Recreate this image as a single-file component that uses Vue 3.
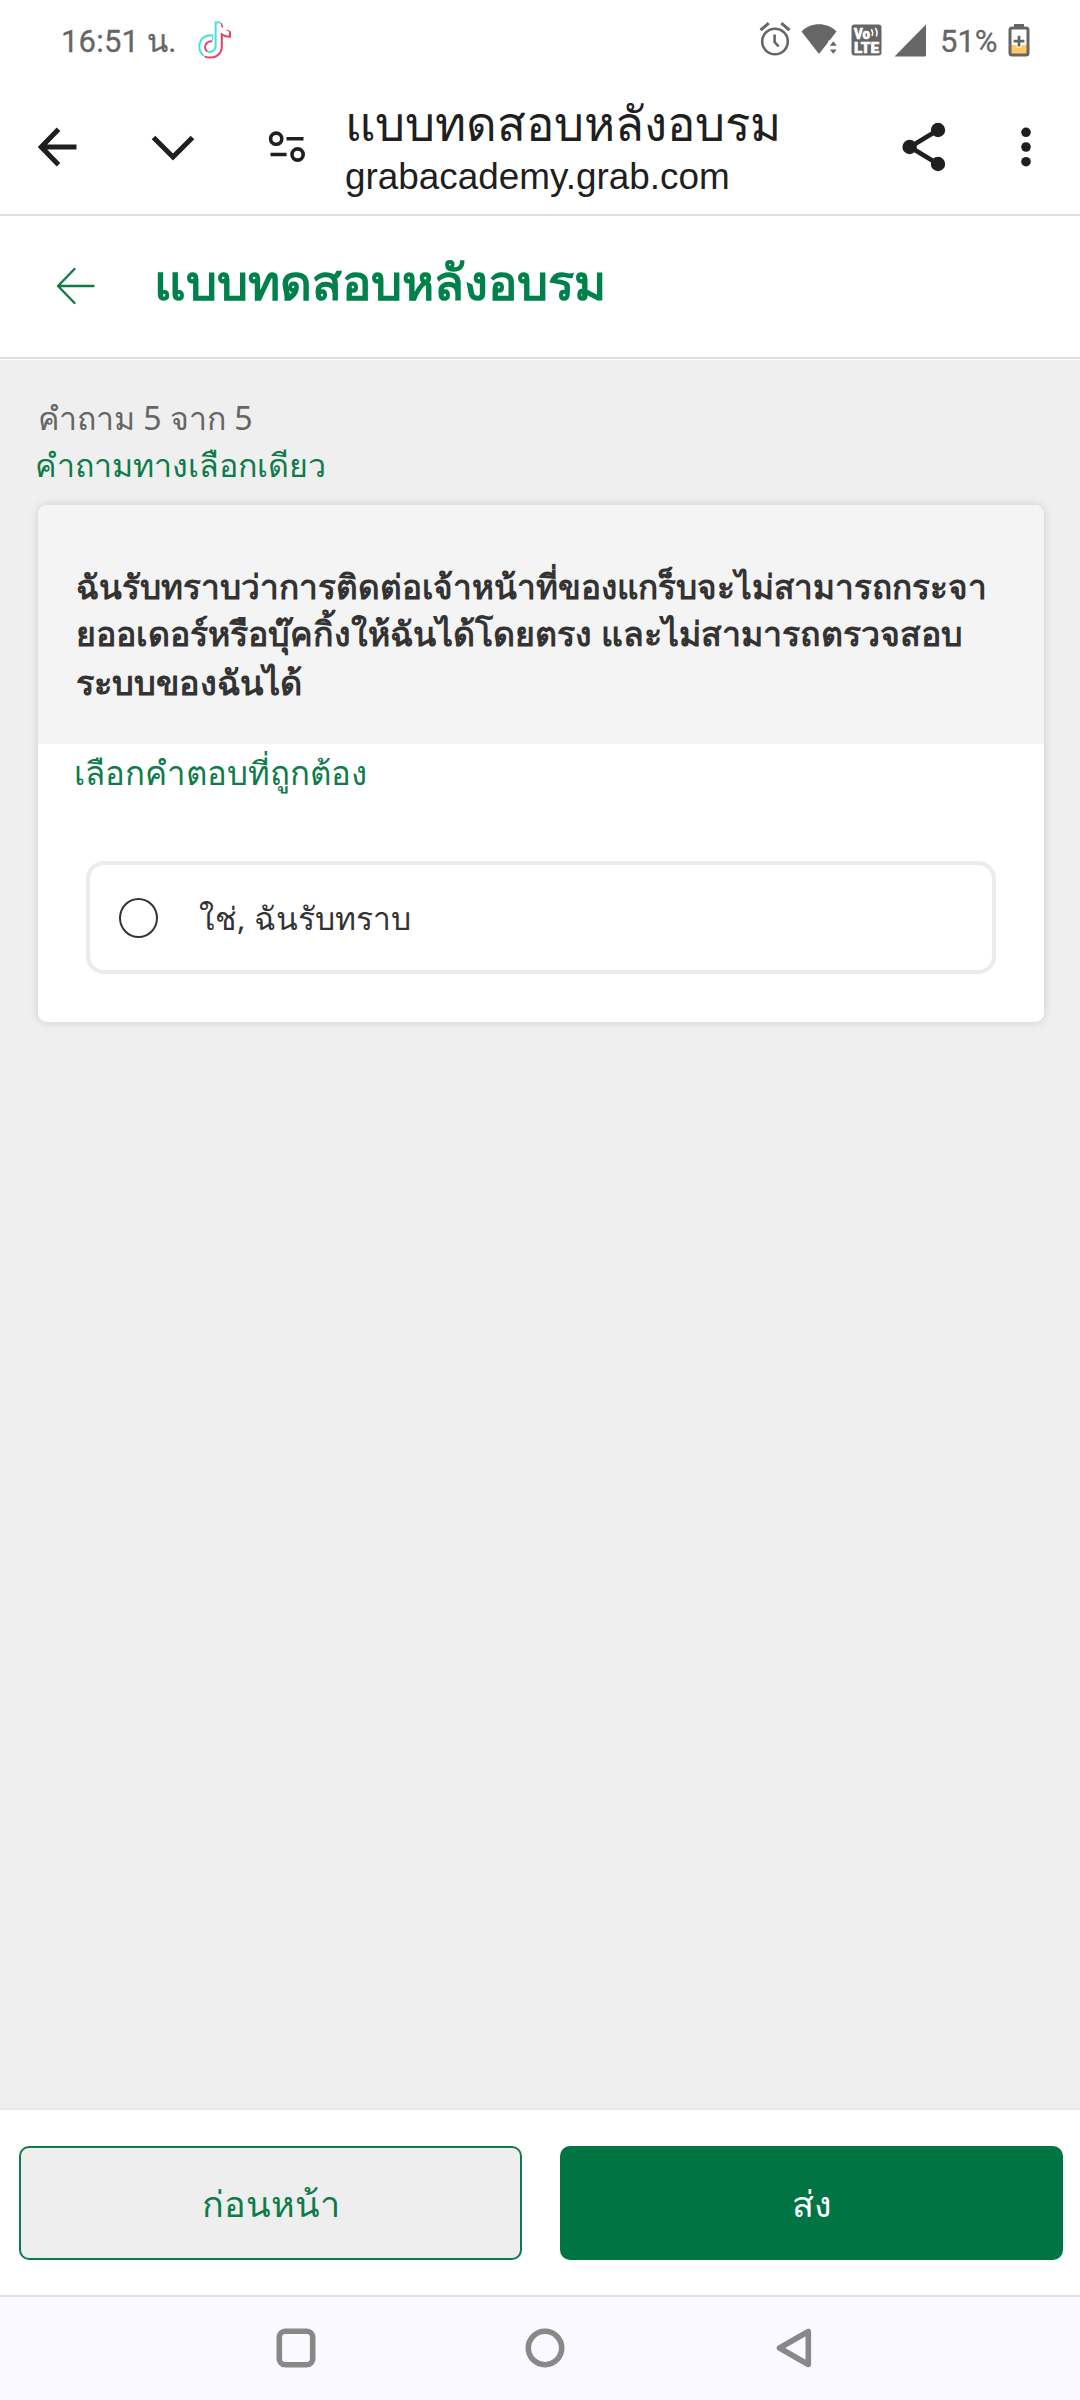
<script setup>
import { ref } from 'vue'

const questionLines = [
  { text: 'ฉันรับทราบว่าการติดต่อเจ้าหน้าที่ของแกร็บจะไม่สามารถกระจา', cls: 'l1' },
  { text: 'ยออเดอร์หรือบุ๊คกิ้งให้ฉันได้โดยตรง และไม่สามารถตรวจสอบ', cls: 'l2' },
  { text: 'ระบบของฉันได้', cls: 'l3' },
]
const options = ['ใช่, ฉันรับทราบ']
const selected = ref(null)
</script>

<template>
  <div class="screen">
    <header class="status">
      <span class="clock">16:51 น.</span>
      <svg class="tiktok" width="38" height="40" viewBox="0 0 38 40" fill="none">
        <path d="M15.500 15.300C7.500 14.300 2.300 20 2.300 26.500c0 4.500 2.200 7.500 4.500 9" stroke="#45e3e0" stroke-width="2" />
        <path d="M23.800 2.600H18.600V26.500a5.800 5.800 0 0 1-9.300 4.200" stroke="#45e3e0" stroke-width="2" />
        <path d="M15.600 15v5.200" stroke="#45e3e0" stroke-width="1.400" />
        <path d="M15.300 21.400c-4.800-.4-7.300 2.600-7.300 5.600 0 1.800.8 3.200 2 4.200" stroke="#e8415f" stroke-width="2" />
        <path d="M7.500 36.300c8.500 3.600 17.300-1 17.300-9.800V14.300c2.600 1.700 5 2.400 8.200 2.500V11.300" stroke="#e8415f" stroke-width="2" />
        <path d="M24.300 3.200c.2 1.800.6 3 1.400 4.200" stroke="#e8415f" stroke-width="1.500" />
        <path d="M29.500 10.200l3.500 1.100" stroke="#e8415f" stroke-width="1.200" />
      </svg>
      <div class="sys">
        <svg class="alarm" width="32" height="36" viewBox="0 0 32 36" fill="none" stroke="#666" stroke-width="2.600">
          <circle cx="16" cy="20.500" r="12.800" />
          <path d="M15.600 13.500v7.500l4 4.500" />
          <path d="M1.500 9.200 9.700 2.200M30.500 9.200 22.300 2.200" stroke-width="3" />
        </svg>
        <svg class="wifi" width="38" height="34" viewBox="0 0 38 34" fill="#666">
          <path d="M0.500 8.500C10-1.200 26-1.200 35.500 8.500L18 31Z" />
          <path d="M27.300 17.500H38V31H27.300Z" fill="#fff" />
          <path d="M28.800 22.700l3.500-4.400 3.500 4.400zM28.800 26.600h7l-3.500 4.200z" />
        </svg>
        <svg class="volte" width="31" height="32" viewBox="0 0 31 32">
          <rect x="0.500" y="0.500" width="30" height="31" rx="3" fill="#666" />
          <text x="3" y="15" textLength="16" lengthAdjust="spacingAndGlyphs">Vo</text>
          <text x="3" y="28.500" textLength="25" lengthAdjust="spacingAndGlyphs">LTE</text>
          <path d="M20.300 5.300q2.200 3 .8 6.500M24.300 4q2.800 4 1 8.500" fill="none" stroke="#fff" stroke-width="1.600" />
        </svg>
        <svg class="signal" width="32" height="33" viewBox="0 0 32 33"><path d="M32 .5V31a1.500 1.500 0 0 1-1.500 1.500H.5z" fill="#666" /></svg>
        <span class="pct">51%</span>
        <svg class="battery" width="22" height="34" viewBox="0 0 22 34">
          <rect x="6" y="1" width="10" height="5" fill="#666" />
          <rect x="2" y="5" width="18" height="27" rx="1.500" fill="#fff" />
          <rect x="3" y="22" width="16" height="9" fill="#ffc966" />
          <rect x="2" y="5" width="18" height="27" rx="2" fill="none" stroke="#666" stroke-width="3" />
          <path d="M11 12v12.500M4.800 18.200h12.400" stroke="#fff" stroke-width="5" />
          <path d="M11 12.800v10.800M5.600 18.200h10.800" stroke="#666" stroke-width="2.800" />
        </svg>
      </div>
    </header>

    <nav class="toolbar">
      <svg class="tb-back" width="40" height="40" viewBox="0 0 40 40" fill="none" stroke="#1f1f1f" stroke-width="5">
        <path d="M38.500 20H4M20.500 2.300 3.300 20 20.500 37.700" />
      </svg>
      <svg class="tb-down" width="44" height="28" viewBox="0 0 44 28" fill="none" stroke="#1f1f1f" stroke-width="5"><path d="M2.500 3.500 22 23 41.500 3.500" /></svg>
      <svg class="tb-tune" width="38" height="32" viewBox="0 0 38 32" fill="none" stroke="#1f1f1f" stroke-width="3.600">
        <circle cx="8.200" cy="7.700" r="5.600" /><path d="M18.500 7.700H35.500M2.500 23.500H18.500" /><circle cx="29.600" cy="23.500" r="5.600" />
      </svg>
      <div class="tb-text">
        <div class="tb-title">แบบทดสอบหลังอบรม</div>
        <div class="tb-url">grabacademy.grab.com</div>
      </div>
      <svg class="tb-share" width="44" height="50" viewBox="0 0 44 50" fill="#1f1f1f">
        <path d="M36 8 8 25 36 42" fill="none" stroke="#1f1f1f" stroke-width="4.600" />
        <circle cx="36" cy="8" r="7.200" /><circle cx="7.600" cy="25" r="7.200" /><circle cx="36" cy="42" r="7.200" />
      </svg>
      <svg class="tb-more" width="10" height="40" viewBox="0 0 10 40" fill="#1f1f1f">
        <circle cx="5" cy="5.300" r="4.800" /><circle cx="5" cy="20" r="4.800" /><circle cx="5" cy="34.700" r="4.800" />
      </svg>
    </nav>

    <div class="page-head">
      <svg class="ph-back" width="40" height="38" viewBox="0 0 40 38" fill="none" stroke="#0d7c4a" stroke-width="2.400" stroke-linecap="round" stroke-linejoin="round">
        <path d="M37.500 19H2M18.500 2 2 19 18.500 36" />
      </svg>
      <h1>แบบทดสอบหลังอบรม</h1>
    </div>

    <main>
      <p class="count">คำถาม 5 จาก 5</p>
      <p class="kind">คำถามทางเลือกเดียว</p>
      <section class="card">
        <div class="question">
          <div v-for="l in questionLines" :key="l.cls" class="q-line" :class="l.cls">{{ l.text }}</div>
        </div>
        <p class="hint">เลือกคำตอบที่ถูกต้อง</p>
        <div v-for="(o, i) in options" :key="o" class="option" @click="selected = i">
          <span class="radio" :class="{ on: selected === i }"></span>
          <span class="o-text">{{ o }}</span>
        </div>
      </section>
    </main>

    <footer class="actions">
      <button class="btn prev">ก่อนหน้า</button>
      <button class="btn send">ส่ง</button>
    </footer>

    <div class="sysnav">
      <svg width="40" height="40" viewBox="0 0 40 40" fill="none" stroke="#888" stroke-width="5.600"><rect x="3.300" y="3.300" width="33.400" height="33.400" rx="6" /></svg>
      <svg width="40" height="40" viewBox="0 0 40 40" fill="none" stroke="#888" stroke-width="5.600"><circle cx="20" cy="20" r="16.700" /></svg>
      <svg width="40" height="40" viewBox="0 0 40 40" fill="none" stroke="#888" stroke-width="5.600" stroke-linejoin="round"><path d="M34.300 3.500V36.500L5.500 20Z" /></svg>
    </div>
  </div>
</template>

<style>
body { background: #fff; }
</style>

<style scoped>
.screen {
  width: 1080px;
  height: 2400px;
  display: flex;
  flex-direction: column;
  background: #fff;
  font-family: 'Noto Sans', sans-serif;
  overflow: hidden;
  white-space: nowrap;
}
p, h1 { margin: 0; }
svg { flex: none; display: block; }

.status {
  height: 80px;
  box-sizing: border-box;
  padding: 4px 50px 0 61px;
  display: flex;
  align-items: center;
  font-family: 'Roboto', sans-serif;
  font-size: 31px;
  line-height: 36px;
  color: #666;
}
.clock { width: 136px; letter-spacing: 0.2px; -webkit-text-stroke: 0.3px #666; }
.tiktok { margin-top: -5px; }
.sys { margin-left: auto; display: flex; align-items: center; }
.alarm { margin: -7px 10px 0 0; }
.wifi { margin: -4px 12px 0 0; }
.volte { margin: -5px 12px 0 0; }
.volte text { font: 900 14.5px 'Roboto', sans-serif; fill: #fff; stroke: #fff; stroke-width: 0.5px; }
.signal { margin: -4px 14px 0 0; }
.pct { width: 68px; -webkit-text-stroke: 0.3px #666; }
.battery { margin: -5px 0 0 0; }

.toolbar {
  height: 134px;
  border-bottom: 2px solid #e0e0e0;
  display: flex;
  align-items: flex-start;
  padding-left: 38px;
  color: #1f1f1f;
}
.tb-back { margin-top: 47px; }
.tb-down { margin: 54px 0 0 73px; }
.tb-tune { margin: 51px 0 0 73px; }
.tb-text { width: 559px; padding: 17px 0 0 39px; box-sizing: border-box; }
.tb-title { font-size: 47.3px; line-height: 52px; }
.tb-url { margin-top: 4px; font-family: 'Liberation Sans', sans-serif; font-size: 36.9px; line-height: 48px; }
.tb-share { margin-top: 42px; margin-left: 37px; }
.tb-more { margin: 47px 0 0 75px; }

.page-head {
  height: 141px;
  border-bottom: 2px solid #ddd;
  margin-bottom: 1px;
  display: flex;
  align-items: flex-start;
  padding-left: 56px;
}
.ph-back { margin-top: 51px; }
h1 { margin: 35px 0 0 58px; font-size: 49px; line-height: 60px; font-weight: 700; color: #00804a; }

main { flex: 1; background: #efefef; padding: 34px 36px 0 38px; }
.count, .kind { font-size: 32.1px; line-height: 47px; }
.count { color: #666; }
.kind { color: #0d7c4a; margin-left: -3px; font-size: 32.2px; }

.card {
  margin-top: 17px;
  height: 517px;
  border-radius: 9px;
  background: #fff;
  box-shadow: 0 0 10px rgba(0, 0, 0, 0.14);
}
.question {
  height: 239px;
  box-sizing: border-box;
  padding: 58px 0 0 38px;
  border-radius: 9px 9px 0 0;
  background: #f4f4f4;
  color: #333;
  font-weight: 700;
}
.q-line { line-height: 47.3px; }
.l1 { font-size: 33.35px; }
.l2 { font-size: 33.9px; }
.l3 { font-size: 34.3px; }
.hint { padding: 5px 0 0 36px; font-size: 33px; line-height: 47px; color: #0d7c4a; }
.option {
  margin: 65px 48px 0;
  height: 113px;
  box-sizing: border-box;
  border: 4px solid #ebebeb;
  border-radius: 18px;
  display: flex;
  align-items: center;
  padding-left: 29px;
}
.radio { width: 39px; height: 40px; box-sizing: border-box; border: 2px solid #333; border-radius: 50%; }
.radio.on { background: radial-gradient(#00804a 45%, transparent 48%); }
.o-text { margin-left: 41px; font-size: 31.8px; line-height: 48px; color: #333; }

.actions {
  height: 149px;
  border-top: 2px solid #e8e8e8;
  display: flex;
  justify-content: space-between;
  padding: 36px 17px 0 19px;
}
.btn {
  width: 503px;
  height: 114px;
  box-sizing: border-box;
  padding: 1px 0 0;
  border: 2px solid #0d7c4a;
  border-radius: 10px;
  background: #eee;
  color: #0d7c4a;
  font: 400 36px/48px 'Noto Sans', sans-serif;
}
.send { background: #007543; border-color: #007543; color: #fff; }

.sysnav {
  height: 103px;
  box-sizing: border-box;
  flex-basis: 105px;
  flex-shrink: 0;
  border-top: 2px solid #e0e0e6;
  background: #faf9ff;
  display: flex;
  justify-content: center;
  align-items: center;
  gap: 209px;
  padding: 0 0 2px 10px;
}
</style>
